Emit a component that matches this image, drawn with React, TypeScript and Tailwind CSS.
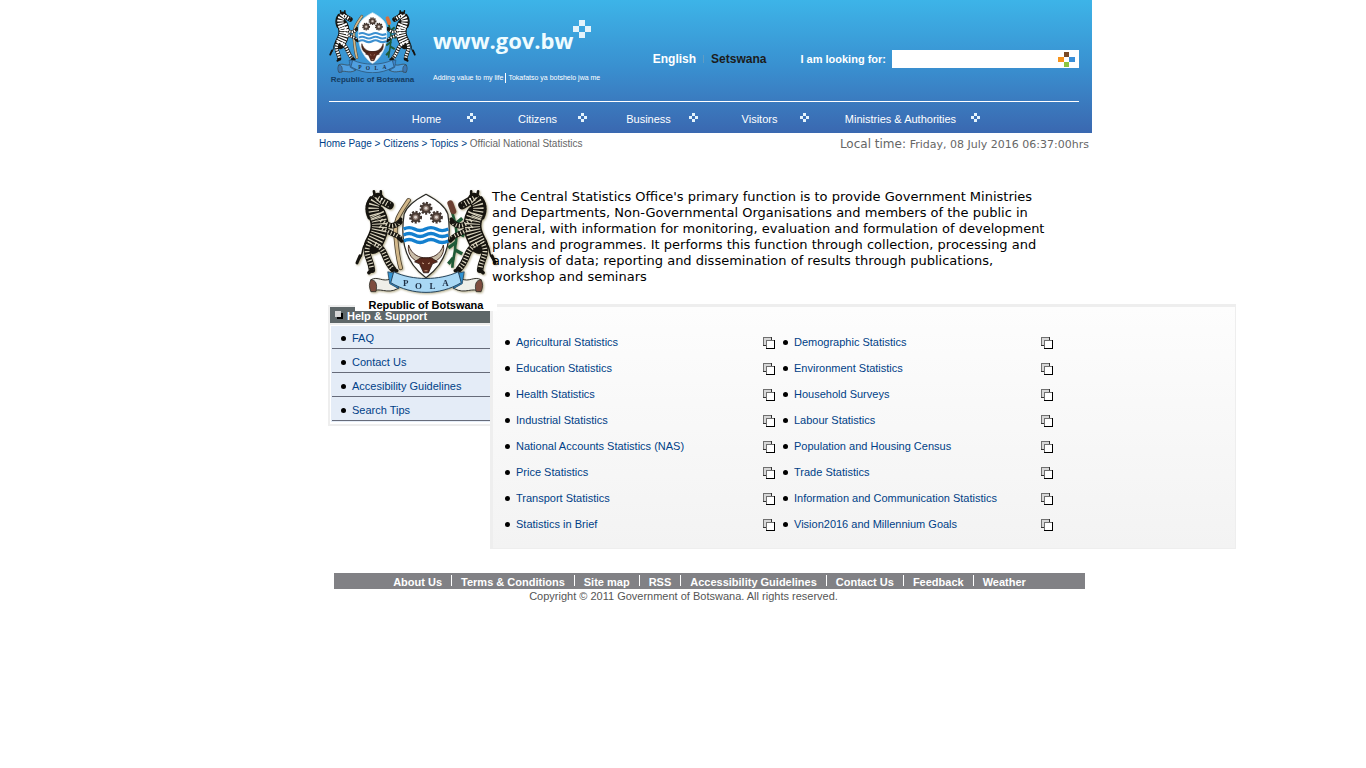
import React from "react";

const navItems = [
  { label: "Home", wide: false },
  { label: "Citizens", wide: false },
  { label: "Business", wide: false },
  { label: "Visitors", wide: false },
  { label: "Ministries & Authorities", wide: true },
];

const helpLinks = ["FAQ", "Contact Us", "Accesibility Guidelines", "Search Tips"];

const topics = [
  "Agricultural Statistics",
  "Demographic Statistics",
  "Education Statistics",
  "Environment Statistics",
  "Health Statistics",
  "Household Surveys",
  "Industrial Statistics",
  "Labour Statistics",
  "National Accounts Statistics (NAS)",
  "Population and Housing Census",
  "Price Statistics",
  "Trade Statistics",
  "Transport Statistics",
  "Information and Communication Statistics",
  "Statistics in Brief",
  "Vision2016 and Millennium Goals",
];

const footerLinks = [
  "About Us",
  "Terms & Conditions",
  "Site map",
  "RSS",
  "Accessibility Guidelines",
  "Contact Us",
  "Feedback",
  "Weather",
];

const zebraParts = [
  { d: "M23 10 L35 17", w: 8, s: 5.5 },
  { d: "M23 11 C17 16 18 24 22 32", w: 13, s: 10.5 },
  { d: "M22 26 C28 38 23 48 18 57", w: 18, s: 15 },
  { d: "M26 32 C34 38 38 40 45 34", w: 5.5, s: 4 },
  { d: "M25 38 C34 46 42 46 45 50", w: 5, s: 3.6 },
  { d: "M15 54 C8 66 16 70 17 82", w: 6.5, s: 4.8 },
  { d: "M20 56 C32 62 28 70 38 81", w: 6.5, s: 4.8 },
];

function Zebra({ light, dash }: { light: string; dash: string }) {
  return (
    <g fill="none" strokeLinecap="round">
      {zebraParts.map((p) => (
        <path key={p.d} d={p.d} stroke="#16140f" strokeWidth={p.w} />
      ))}
      {zebraParts.map((p) => (
        <path key={p.d} d={p.d} stroke={light} strokeWidth={p.s} strokeLinecap="butt" strokeDasharray={dash} />
      ))}
      <path d="M12 54 C5 60 10 66 4 71" stroke="#16140f" strokeWidth="1.6" />
      <path d="M5 68 L2 75" stroke="#16140f" strokeWidth="3" />
      <path d="M20 8 L19 3 M26 7 L26 3" stroke="#16140f" strokeWidth="2.6" />
      <path d="M16 9 C10 16 11 24 14 30" stroke="#16140f" strokeWidth="2.4" strokeDasharray="2 1" />
      <path d="M34 16 L36 18 M44 34 L46 31 M44 50 L47 53 M17 82 L14 85 M38 81 L42 83" stroke="#16140f" strokeWidth="3.5" />
      <circle cx="27" cy="10.5" r="0.9" fill="#fff" />
    </g>
  );
}

function Gear({ cx, cy }: { cx: number; cy: number }) {
  return (
    <g>
      <circle cx={cx} cy={cy} r="5.2" fill="none" stroke="#3b302b" strokeWidth="2.6" strokeDasharray="2 1.4" />
      <circle cx={cx} cy={cy} r="3.9" fill="#8d7a70" stroke="#4a3c35" strokeWidth="2.2" />
      <circle cx={cx} cy={cy} r="1.5" fill="#ded6d0" />
    </g>
  );
}

function CoatOfArms({ className, small }: { className: string; small?: boolean }) {
  const light = small ? "#ffffff" : "#d9d3bd";
  const dash = small ? "2.4 1.8" : "1.2 2";
  const wave = small ? "#3b8fd0" : "#1480cf";
  const band = small ? "#4f9fe0" : "#a9d8f5";
  return (
    <svg viewBox="0 0 143 106" className={className} role="img" aria-label="Coat of arms of Botswana">
      <path d="M54 12 C46 24 39 32 41 48 C42 60 43 70 46 80" fill="none" stroke="#4d4130" strokeWidth="4.6" strokeLinecap="round" />
      <path d="M54 12 C46 24 39 32 41 48 C42 60 43 70 46 80" fill="none" stroke="#d2b88a" strokeWidth="3" strokeLinecap="round" />
      <path d="M96 18 C101 34 104 44 101 58 C101 66 98 72 98 80" fill="none" stroke="#1f5a37" strokeWidth="2.6" />
      <path d="M101 36 L108 30 M103 44 L110 48 M102 54 L94 60 M101 62 L108 66 M99 70 L94 76" stroke="#1f5a37" strokeWidth="3.4" />
      <path d="M96 15 L99 23" stroke={small ? "#d8703c" : "#6b4033"} strokeWidth="6" strokeLinecap="round" />
      <path
        d="M71.5 6 C60 12 52 18 49.5 26 C45 54 52 76 71.5 90 C91 76 98 54 93.5 26 C91 18 83 12 71.5 6 Z"
        fill="#fff"
        stroke={small ? "#dce8f0" : "#2a2a26"}
        strokeWidth="1.2"
      />
      <Gear cx={71.5} cy={20} />
      <Gear cx={61} cy={29} />
      <Gear cx={82} cy={29} />
      {[41, 47, 53].map((y) => (
        <path
          key={y}
          d={`M49 ${y} q5.5 -3 11 0 t11 0 t11 0 t12 0`}
          fill="none"
          stroke={wave}
          strokeWidth="3.4"
        />
      ))}
      <path
        d="M54 57 C57 67 65 70 71.5 70 C78 70 86 67 89 57 C91 66 84 74 77 74 L66 74 C59 74 52 66 54 57 Z"
        fill={small ? "#4b2619" : "#c9bda8"}
        stroke="#3a2119"
        strokeWidth="0.9"
      />
      <path
        d="M66 70 L77 70 L83 74 L78 76 C77 79 75 82 74 85 L69 85 C68 82 66 79 65 76 L60 74 Z"
        fill="#59291d"
        stroke="#2a1510"
        strokeWidth="0.8"
      />
      <path d="M67.5 75 L69.5 76 M75.5 75 L73.5 76 M70 83 L73 83" stroke="#d3aa91" strokeWidth="1" />
      <Zebra light={light} dash={dash} />
      <g transform="translate(143 0) scale(-1 1)">
        <Zebra light={light} dash={dash} />
      </g>
      {[false, true].map((flip) => (
        <g key={String(flip)} transform={flip ? "translate(143 0) scale(-1 1)" : undefined}>
          <path d="M36 91 C28 95 23 88 16 92 L17 104 C25 99 32 107 43 101 L43 93 Z" fill={small ? "#4f9fe0" : "#efefe9"} stroke="#33332e" strokeWidth="1" />
          <path d="M16 92 C21 92 23 97 21 104 L16 104 C14 99 14 96 16 92 Z" fill={small ? "#3c78b4" : "#7e4d3f"} stroke="#33332e" strokeWidth="0.8" />
          <path d="M33 84 L42 86 L44 101 L35 96 Z" fill={small ? "#3c86cc" : "#2f92d2"} stroke="#24435c" strokeWidth="0.8" />
        </g>
      ))}
      <path d="M39 84 C58 93 85 93 104 84 L107 95 C85 108 58 108 36 95 Z" fill={band} stroke="#24435c" strokeWidth="1" />
      <g fontFamily="Liberation Serif, serif" fontWeight="700" fontSize="9" fill="#1d2f45" textAnchor="middle">
        <text x="51" y="98">P</text>
        <text x="64" y="101">O</text>
        <text x="78" y="101">L</text>
        <text x="91" y="98">A</text>
      </g>
    </svg>
  );
}

function Cross({ className }: { className: string }) {
  return (
    <svg viewBox="0 0 9 9" className={className} fill="#e4f3fb" aria-hidden="true">
      <path d="M3 0h3v3h-3zM0 3h3v3h-3zM6 3h3v3h-3zM3 6h3v3h-3z" />
    </svg>
  );
}

function NewWindowIcon() {
  return (
    <svg viewBox="0 0 12 12" className="mt-[2px] h-3 w-3 shrink-0" shapeRendering="crispEdges" aria-hidden="true">
      <path d="M0 0h9v9h-9z" fill="#d8d8d8" />
      <path d="M0 0h9v1h-9zM0 0h1v9h-1z" fill="#707070" />
      <path d="M8 0h1v3h-1zM0 8h3v1h-3z" fill="#333" />
      <path d="M3 3h9v9h-9z" fill="#fff" />
      <path d="M3 3h9v1h-9zM3 3h1v9h-1z" fill="#707070" />
      <path d="M11 3h1v9h-1zM3 11h9v1h-9z" fill="#000" />
    </svg>
  );
}

function Bullet() {
  return <span className="h-[5px] w-[5px] shrink-0 rounded-full bg-black" />;
}

export default function App() {
  return (
    <div className="overflow-x-hidden bg-white pl-[43px] font-['Liberation_Sans',Arial,sans-serif] text-[11px] leading-4">
      <div className="mx-auto max-w-[775px]">
        <header className="bg-linear-to-b from-[#3db4e8] via-[#3990d0] to-[#3a68b0] pr-[13px] pl-3 text-white">
          <div className="flex h-[101px] items-start">
            <figure className="mt-[9px] w-[87px] shrink-0">
              <CoatOfArms className="h-auto w-full" small />
              <figcaption className="text-center text-[8px] leading-[14px] font-bold whitespace-nowrap text-[#143c62]">
                Republic of Botswana
              </figcaption>
            </figure>
            <div className="mt-5 ml-[17px] shrink-0">
              <div className="flex items-start">
                <span className="pt-1 font-['Open_Sans',sans-serif] text-[22px] leading-8 font-bold text-[#effcff]">
                  www.gov.bw
                </span>
                <Cross className="h-[18px] w-[18px]" />
              </div>
              <div className="mt-[17px] flex items-center gap-[2px] text-[7px] leading-[10px] whitespace-nowrap">
                <span>Adding value to my life</span>
                <span className="h-[10px] w-px bg-white" />
                <span>Tokafatso ya botshelo jwa me</span>
              </div>
            </div>
            <div className="mt-[50px] ml-auto flex h-[18px] items-center">
              <a href="#english" className="text-[12px] font-bold">English</a>
              <span className="mx-[7px] h-2 w-px bg-[#5f9cc4]" />
              <a href="#setswana" className="text-[12px] font-bold text-[#1c1c1c]">Setswana</a>
              <label htmlFor="site-search" className="mr-[6px] ml-[34px] font-bold">
                I am looking for:
              </label>
              <div className="flex h-[18px] w-[187px] items-center bg-white pr-1">
                <input id="site-search" type="text" className="h-full min-w-0 flex-1 bg-transparent px-1 text-black outline-none" />
                <button type="button" aria-label="Search">
                  <svg viewBox="0 0 17 15" className="block h-[15px] w-[17px]">
                    <path d="M6 0h5v5h-5z" fill="#7a4a26" />
                    <path d="M0 5h6v5h-6z" fill="#f7941d" />
                    <path d="M11 5h6v5h-6z" fill="#3a8fd8" />
                    <path d="M6 10h5v5h-5z" fill="#8cc63f" />
                  </svg>
                </button>
              </div>
            </div>
          </div>
          <nav className="flex h-8 items-center border-t border-white pt-[3px] pl-[42px]">
            {navItems.map((item) => (
              <div
                key={item.label}
                className={
                  item.wide
                    ? "grid w-[171px] grid-cols-[21px_1fr_21px]"
                    : "grid w-[111px] grid-cols-[21px_1fr_21px]"
                }
              >
                <a href="#nav" className="col-start-2 text-center whitespace-nowrap">{item.label}</a>
                <Cross className="mt-[2px] ml-[6px] h-[9px] w-[9px]" />
              </div>
            ))}
          </nav>
        </header>

        <div className="flex h-[22px] items-center justify-between pr-[3px] pl-[2px] text-[#666]">
          <nav className="text-[10px] whitespace-nowrap text-[#003f87]">
            <a href="#home">Home Page</a> &gt; <a href="#citizens">Citizens</a> &gt; <a href="#topics">Topics</a> &gt;{" "}
            <span className="text-[#666]">Official National Statistics</span>
          </nav>
          <p className="font-['DejaVu_Sans',Verdana,sans-serif] text-[12px] whitespace-nowrap">
            Local time: <span className="text-[11px]">Friday, 08 July 2016 06:37:00hrs</span>
          </p>
        </div>

        <main>
          <section className="flex items-start pt-[33px] pl-[38px]">
            <figure className="relative z-10 -mr-[5px] h-[123px] w-[142px] shrink-0 bg-white">
              <CoatOfArms className="h-[106px] w-full drop-shadow-[1px_1px_1px_#b5ad8a]" />
              <figcaption className="pt-[5px] text-center leading-3 font-bold whitespace-nowrap text-black">
                Republic of Botswana
              </figcaption>
            </figure>
            <p className="relative z-20 w-[560px] pt-px font-['DejaVu_Sans',Verdana,sans-serif] text-[13px] leading-4 text-black">
              The Central Statistics Office's primary function is to provide Government Ministries and Departments,
              Non-Governmental Organisations and members of the public in general, with information for monitoring,
              evaluation and formulation of development plans and programmes. It performs this function through
              collection, processing and analysis of data; reporting and dissemination of results through publications,
              workshop and seminars
            </p>
          </section>

          <div className="-mt-[7px] -mr-36 flex items-start pl-[11px] text-[#003f87]">
            <aside className="mt-px w-[162px] shrink-0 border-2 border-r-0 border-[#eee]">
              <h2 className="flex h-4 items-center gap-1 bg-[#5e6769] pl-[5px] font-bold text-white">
                <svg viewBox="0 0 8 8" className="h-2 w-2" shapeRendering="crispEdges" aria-hidden="true">
                  <path d="M2 2h6v6h-6z" fill="#000" />
                  <path d="M0 0h6v6h-6z" fill="#d4d4d4" />
                </svg>
                <span className="pt-[2px]">Help &amp; Support</span>
              </h2>
              <ul className="border-t-2 border-[#eee] pt-px pb-[2px] pl-px">
                {helpLinks.map((label) => (
                  <li key={label} className="h-6 bg-[#e4ecf7] pl-px">
                    <div className="flex h-[23px] items-center gap-[6px] border-b border-[#666b7a] pt-[2px] pl-[9px]">
                      <Bullet />
                      <a href="#help">{label}</a>
                    </div>
                  </li>
                ))}
              </ul>
            </aside>
            <section className="flex-1 border-t-[3px] border-r border-b border-l-[3px] border-[#eee] bg-linear-to-b from-[#fdfdfd] to-[#f3f3f3] pt-[22px] pb-[11px] pl-[9px]">
              <ul className="grid grid-cols-[278px_278px]">
                {topics.map((label) => (
                  <li key={label} className="flex h-[26px] items-center pr-[5px] pl-[3px]">
                    <Bullet />
                    <a href="#topic" className="mr-auto ml-[6px]">{label}</a>
                    <NewWindowIcon />
                  </li>
                ))}
              </ul>
            </section>
          </div>
        </main>

        <footer className="pt-6">
          <nav className="mr-[7px] ml-[17px] flex h-4 items-center justify-center bg-[#818185] font-bold text-white">
            {footerLinks.map((label, i) => (
              <React.Fragment key={label}>
                {i > 0 && <span className="mx-[9px] mb-[2px] h-[11px] w-px bg-white" />}
                <a href="#footer" className="pt-[2px] whitespace-nowrap">{label}</a>
              </React.Fragment>
            ))}
          </nav>
          <p className="pr-[42px] text-center leading-[14px] text-[#555]">
            Copyright © 2011 Government of Botswana. All rights reserved.
          </p>
        </footer>
      </div>
    </div>
  );
}
